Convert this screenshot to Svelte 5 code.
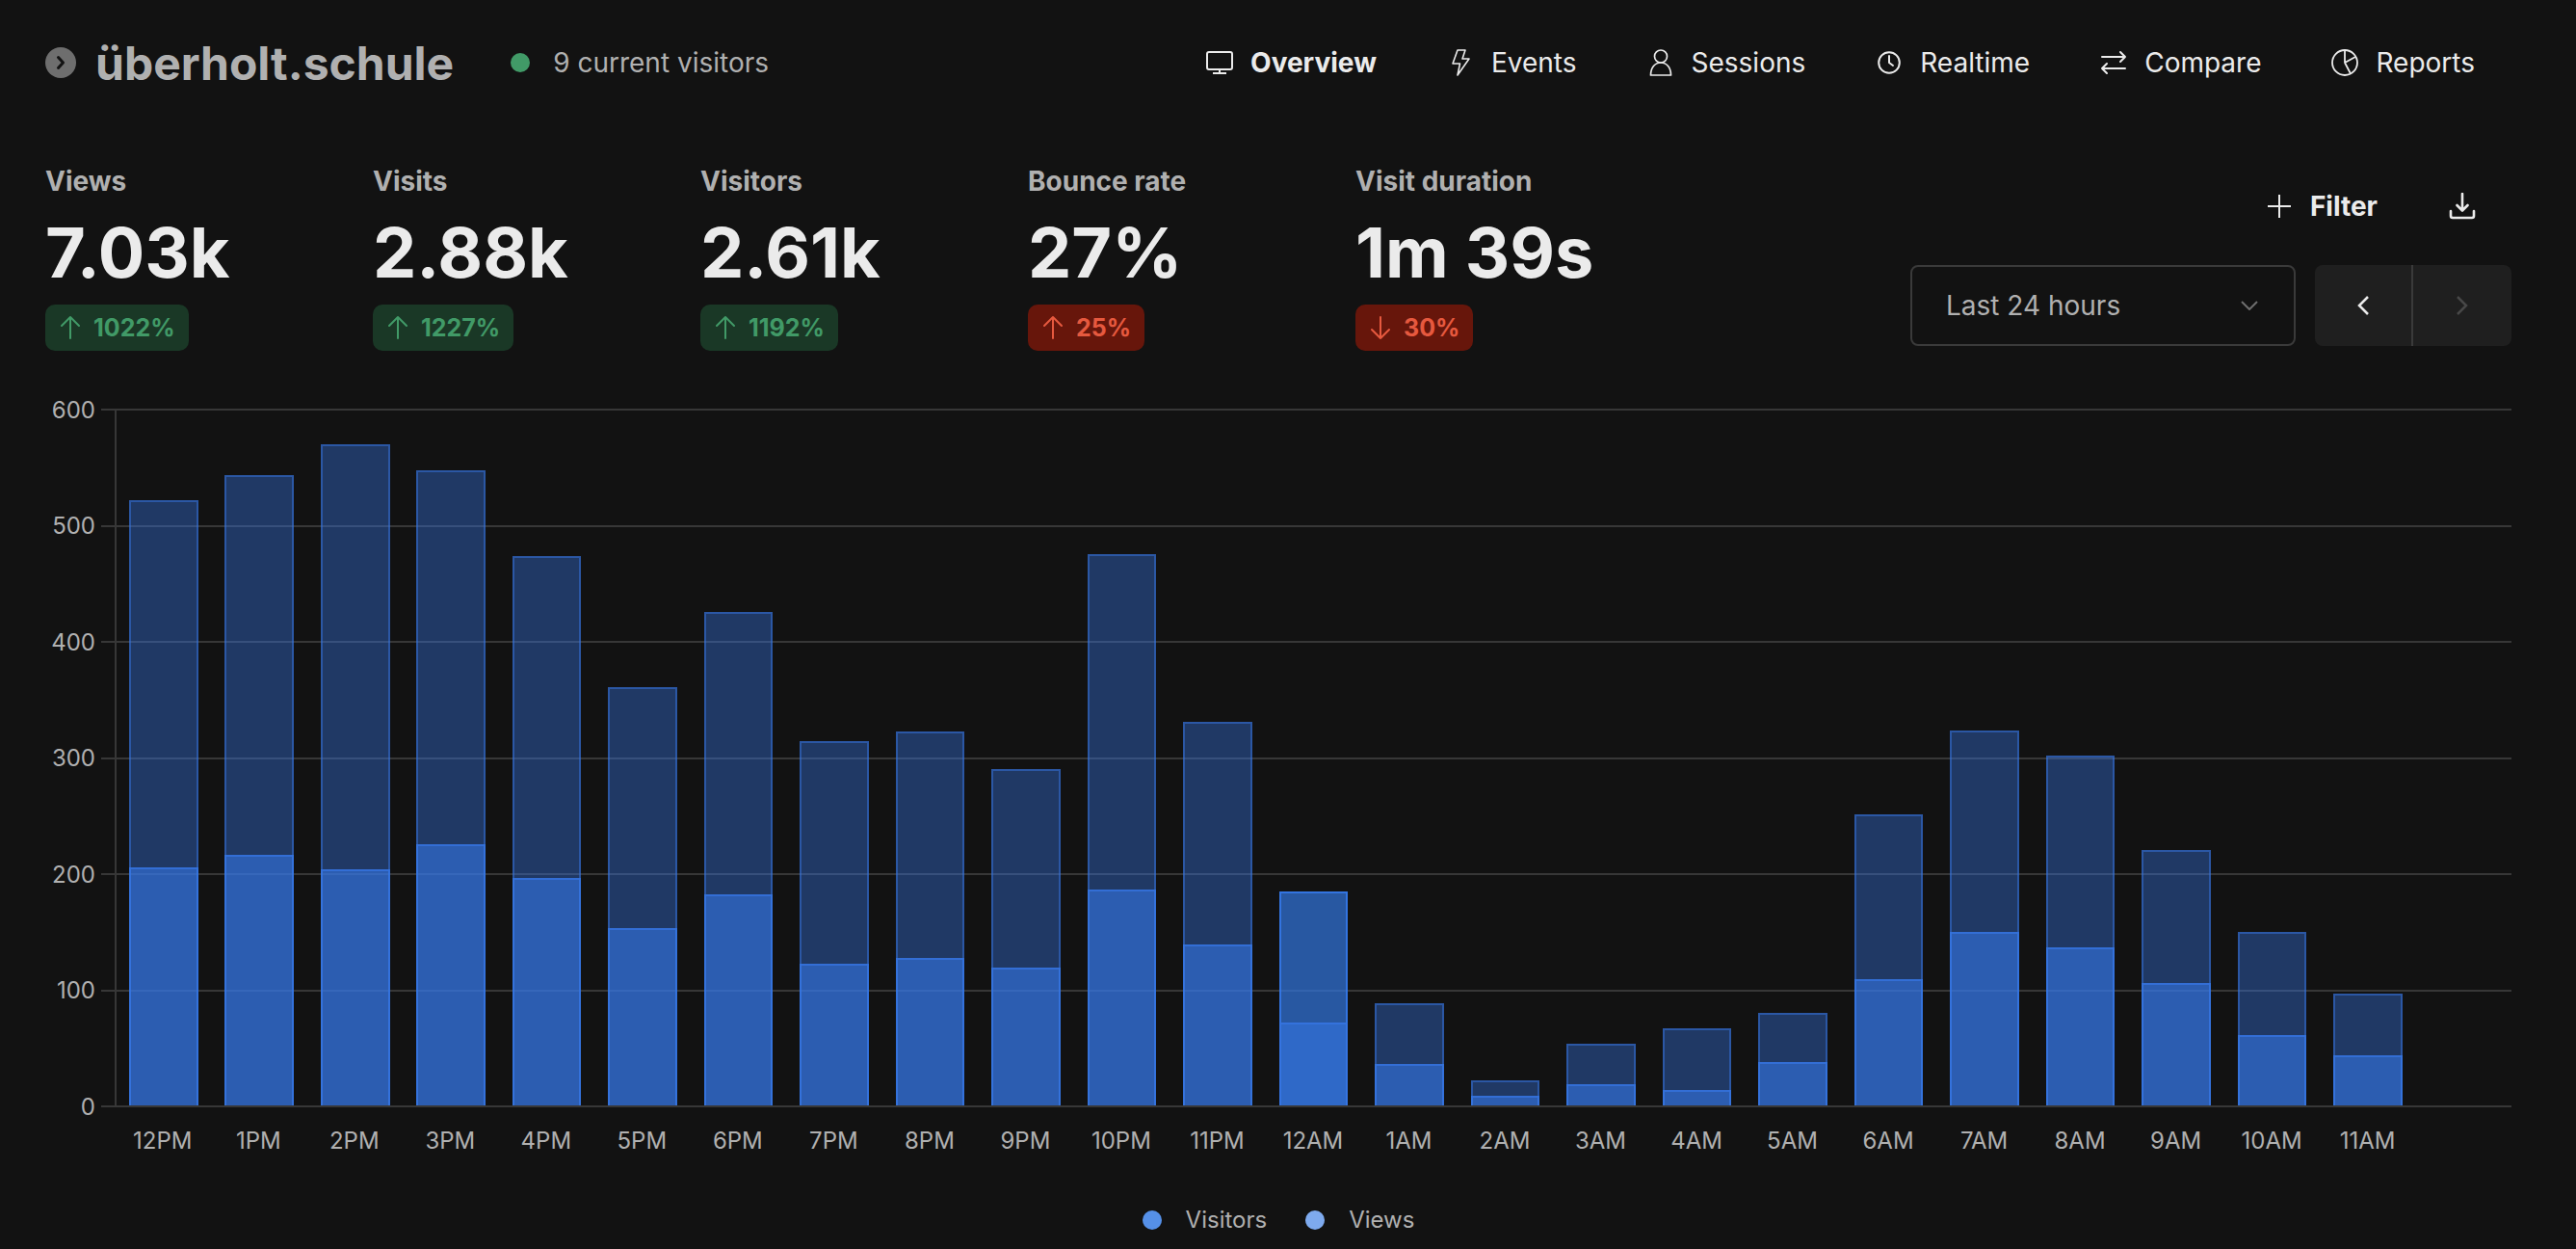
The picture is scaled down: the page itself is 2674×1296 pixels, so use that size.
<script>
  const metrics = [
    { label: 'Views', value: '7.03k', change: '1022%', up: true, good: true },
    { label: 'Visits', value: '2.88k', change: '1227%', up: true, good: true },
    { label: 'Visitors', value: '2.61k', change: '1192%', up: true, good: true },
    { label: 'Bounce rate', value: '27%', change: '25%', up: true, good: false },
    { label: 'Visit duration', value: '1m 39s', change: '30%', up: false, good: false }
  ];

  const tabs = ['Overview', 'Events', 'Sessions', 'Realtime', 'Compare', 'Reports'];
  let activeTab = 'Overview';
  let range = '24hour';

  const max = 600;
  const ticks = [600, 500, 400, 300, 200, 100, 0];

  // last slot is the current hour, nothing recorded yet
  const hours = [
    { label: '12PM', views: 521, visitors: 205 },
    { label: '1PM', views: 543, visitors: 216 },
    { label: '2PM', views: 569, visitors: 203 },
    { label: '3PM', views: 547, visitors: 225 },
    { label: '4PM', views: 473, visitors: 196 },
    { label: '5PM', views: 360, visitors: 153 },
    { label: '6PM', views: 425, visitors: 182 },
    { label: '7PM', views: 314, visitors: 122 },
    { label: '8PM', views: 322, visitors: 127 },
    { label: '9PM', views: 290, visitors: 119 },
    { label: '10PM', views: 475, visitors: 186 },
    { label: '11PM', views: 330, visitors: 139 },
    { label: '12AM', views: 184, visitors: 71, active: true },
    { label: '1AM', views: 88, visitors: 36 },
    { label: '2AM', views: 22, visitors: 8 },
    { label: '3AM', views: 53, visitors: 18 },
    { label: '4AM', views: 66, visitors: 13 },
    { label: '5AM', views: 80, visitors: 37 },
    { label: '6AM', views: 251, visitors: 109 },
    { label: '7AM', views: 323, visitors: 149 },
    { label: '8AM', views: 301, visitors: 136 },
    { label: '9AM', views: 220, visitors: 105 },
    { label: '10AM', views: 149, visitors: 61 },
    { label: '11AM', views: 96, visitors: 43 },
    { label: '', views: 0, visitors: 0 }
  ];
</script>

<main class="page">
  <header class="header">
    <div class="site">
      <svg class="site-icon" viewBox="0 0 32 32" aria-hidden="true">
        <circle cx="16" cy="16" r="16" fill="#6e6e6e" />
        <path d="M13.5 10.5l5 5.5-5 5.5" fill="none" stroke="#121212" stroke-width="3" stroke-linecap="round" stroke-linejoin="round" />
      </svg>
      <h1>überholt.schule</h1>
      <div class="online"><span class="online-dot"></span>9 current visitors</div>
    </div>

    <nav class="tabs">
      {#each tabs as tab}
        <a href="#{tab.toLowerCase()}" class="tab" class:active={tab === activeTab} on:click={() => (activeTab = tab)}>
          <svg class="icon" viewBox="0 0 28 28" fill="none" stroke="currentColor" stroke-width="2" stroke-linejoin="round" aria-hidden="true">
            {#if tab === 'Overview'}
              <rect x="1" y="3" width="26" height="18" rx="2" />
              <path d="M14 21v3M7 25h14" />
            {:else if tab === 'Events'}
              <path d="M11 1h8l-3 9h7L11 27l2.5-12H6z" stroke-width="1.6" />
            {:else if tab === 'Sessions'}
              <circle cx="14" cy="7.5" r="6.5" stroke-width="1.7" />
              <path d="M3.5 27c0-8 4.5-13 10.5-13s10.5 5 10.5 13z" stroke-width="1.7" />
            {:else if tab === 'Realtime'}
              <circle cx="14" cy="14" r="10.8" />
              <path d="M14 7v7l4 3" stroke-linecap="round" />
            {:else if tab === 'Compare'}
              <path d="M2 8h24M21 3l5 5-5 5M26 20H2M7 15l-5 5 5 5" stroke-linecap="round" />
            {:else}
              <circle cx="14" cy="14" r="13" stroke-width="1.8" />
              <path d="M14 1v13l11-6M14 14l6 11.5" stroke-width="1.8" />
            {/if}
          </svg>
          <span>{tab}</span>
        </a>
      {/each}
    </nav>
  </header>

  <section class="summary">
    <div class="metrics">
      {#each metrics as metric}
        <div class="metric">
          <div class="metric-label">{metric.label}</div>
          <div class="metric-value">{metric.value}</div>
          <div class="change" class:bad={!metric.good}>
            <svg class="arrow" viewBox="0 0 24 26" fill="none" stroke="currentColor" stroke-width="2" stroke-linecap="round" stroke-linejoin="round" aria-hidden="true">
              {#if metric.up}
                <path d="M12 24V2M3 11l9-9 9 9" />
              {:else}
                <path d="M12 2v22M3 15l9 9 9-9" />
              {/if}
            </svg>
            {metric.change}
          </div>
        </div>
      {/each}
    </div>

    <div class="controls">
      <div class="actions">
        <button class="filter">
          <svg class="plus" viewBox="0 0 24 24" stroke="currentColor" stroke-width="2" aria-hidden="true">
            <path d="M12 0v24M0 12h24" />
          </svg>
          Filter
        </button>
        <button class="download" aria-label="Download">
          <svg class="icon" viewBox="0 0 28 28" fill="none" stroke="currentColor" stroke-width="2.6" stroke-linecap="round" stroke-linejoin="round" aria-hidden="true">
            <path d="M14 1v17M8.5 13l5.5 5.5 5.5-5.5M2 19v5a2 2 0 0 0 2 2h20a2 2 0 0 0 2-2v-5" />
          </svg>
        </button>
      </div>
      <div class="dates">
        <div class="select">
          <select aria-label="Date range" bind:value={range}>
            <option value="24hour">Last 24 hours</option>
            <option value="7day">Last 7 days</option>
            <option value="30day">Last 30 days</option>
          </select>
          <svg class="chevron" viewBox="0 0 18 10" fill="none" stroke="currentColor" stroke-width="2" aria-hidden="true">
            <path d="M1 1l8 8 8-8" />
          </svg>
        </div>
        <div class="pager">
          <button aria-label="Previous">
            <svg viewBox="0 0 12 20" fill="none" stroke="currentColor" stroke-width="2.5" aria-hidden="true">
              <path d="M11 1L2 10l9 9" />
            </svg>
          </button>
          <button aria-label="Next" disabled>
            <svg viewBox="0 0 12 20" fill="none" stroke="currentColor" stroke-width="2.5" aria-hidden="true">
              <path d="M1 1l9 9-9 9" />
            </svg>
          </button>
        </div>
      </div>
    </div>
  </section>

  <section class="chart">
    <div class="y-axis">
      {#each ticks as tick}
        <span>{tick}</span>
      {/each}
    </div>
    <div class="plot">
      <div class="grid">
        {#each ticks as tick}
          <div class="grid-line"></div>
        {/each}
      </div>
      <div class="bars">
        {#each hours as hour}
          <div class="slot" class:active={hour.active}>
            {#if hour.views}
              <div class="bar views" style="height: {(hour.views / max) * 100}%"></div>
              <div class="bar visitors" style="height: {(hour.visitors / max) * 100}%"></div>
            {/if}
          </div>
        {/each}
      </div>
    </div>
    <div class="x-axis">
      {#each hours as hour}
        <span>{hour.label}</span>
      {/each}
    </div>
  </section>

  <div class="legend">
    <div class="legend-item"><span class="legend-dot"></span>Visitors</div>
    <div class="legend-item"><span class="legend-dot light"></span>Views</div>
  </div>
</main>

<style>
  :global(body) {
    margin: 0;
    background: #121212;
  }

  .page {
    box-sizing: border-box;
    min-height: 100vh;
    padding: 23px 67px 0 47px;
    background: #121212;
    color: #ebebeb;
    font-family: Inter, 'Liberation Sans', sans-serif;
    font-size: 28px;
  }

  .page * {
    box-sizing: border-box;
  }

  button,
  select {
    border: 0;
    background: none;
    color: inherit;
    font: inherit;
    cursor: pointer;
  }

  .header {
    display: flex;
    align-items: center;
    justify-content: space-between;
    height: 84px;
  }

  .site {
    display: flex;
    align-items: center;
    color: #b0b0b0;
  }

  .site-icon {
    width: 32px;
    height: 32px;
    margin-right: 20px;
  }

  h1 {
    margin: 0;
    font-size: 48px;
    font-weight: 700;
  }

  .online {
    display: flex;
    align-items: center;
    gap: 24px;
    margin-left: 59px;
  }

  .online-dot {
    width: 20px;
    height: 20px;
    border-radius: 50%;
    background: #419a67;
  }

  .tabs {
    display: flex;
    gap: 73px;
    margin-right: 38px;
  }

  .tab {
    display: flex;
    align-items: center;
    gap: 18px;
    color: inherit;
    text-decoration: none;
  }

  .tab.active {
    font-weight: 700;
  }

  .icon {
    width: 28px;
    height: 28px;
  }

  .summary {
    display: flex;
    justify-content: space-between;
    margin-top: 63px;
  }

  .metrics {
    display: grid;
    grid-template-columns: repeat(5, 340px);
  }

  .metric-label {
    color: #b0b0b0;
    font-weight: 700;
    line-height: 36px;
  }

  .metric-value {
    font-size: 72px;
    font-weight: 700;
    line-height: 80px;
    margin: 16px 0 14px;
    white-space: nowrap;
  }

  .change {
    display: inline-flex;
    align-items: center;
    gap: 12px;
    height: 48px;
    padding: 0 14px;
    border-radius: 10px;
    background: #1a3826;
    color: #419a67;
    font-size: 25px;
    font-weight: 700;
  }

  .change.bad {
    background: #67160b;
    color: #e6593f;
  }

  .arrow {
    width: 24px;
    height: 26px;
  }

  .controls {
    display: flex;
    flex-direction: column;
    align-items: flex-end;
    justify-content: space-between;
    padding: 27px 0 5px;
  }

  .actions {
    display: flex;
    align-items: center;
    gap: 74px;
    margin-right: 37px;
  }

  .filter {
    display: flex;
    align-items: center;
    gap: 20px;
    padding: 0;
    font-weight: 700;
  }

  .plus {
    width: 24px;
    height: 24px;
  }

  .download {
    display: flex;
    padding: 0;
  }

  .dates {
    display: flex;
    gap: 20px;
  }

  .select {
    position: relative;
    width: 400px;
  }

  .select select {
    width: 100%;
    height: 84px;
    padding: 0 35px;
    border: 2px solid #3a3a3a;
    border-radius: 8px;
    color: #b0b0b0;
    appearance: none;
  }

  /* sits over the native select */
  .chevron {
    position: absolute;
    top: 37px;
    right: 39px;
    width: 18px;
    height: 10px;
    color: #6e6e6e;
    pointer-events: none;
  }

  .pager {
    display: flex;
    border-radius: 8px;
    background: #1f1f1f;
  }

  .pager button {
    display: flex;
    align-items: center;
    justify-content: center;
    width: 102px;
    height: 84px;
    padding: 0;
  }

  .pager button:first-child {
    border-right: 2px solid #3a3a3a;
  }

  .pager button:disabled {
    color: #484848;
  }

  .pager svg {
    width: 12px;
    height: 20px;
  }

  .chart {
    display: grid;
    grid-template-columns: 72px 1fr;
    grid-template-rows: 725px auto;
    margin-top: 60px;
    color: #b0b0b0;
    font-size: 24px;
  }

  .y-axis {
    display: flex;
    flex-direction: column;
    justify-content: space-between;
    align-items: flex-end;
    padding-right: 20px;
  }

  .y-axis span {
    display: flex;
    align-items: center;
    height: 2px;
  }

  .plot {
    display: grid;
    border-left: 2px solid #373737;
  }

  .grid,
  .bars {
    grid-area: 1 / 1;
  }

  .grid {
    display: flex;
    flex-direction: column;
    justify-content: space-between;
    margin-left: -16px;
  }

  .grid-line {
    height: 2px;
    background: #373737;
  }

  .bars {
    display: flex;
    margin: 0 0 2px -1px;
  }

  .slot {
    flex: 1;
    display: grid;
    align-items: end;
    grid-template-columns: 72%;
    grid-template-rows: 100%;
    justify-content: center;
  }

  .bar {
    grid-area: 1 / 1;
    border: 2px solid;
    border-bottom: 0;
  }

  .views {
    border-color: rgba(54, 118, 228, 0.5);
    background: rgba(54, 118, 228, 0.4);
  }

  .visitors {
    border-color: rgba(54, 118, 228, 0.7);
    background: rgba(54, 118, 228, 0.6);
  }

  .active .views {
    border-color: rgba(54, 124, 240, 0.8);
    background: rgba(50, 118, 224, 0.7);
  }

  .active .visitors {
    background: rgba(50, 112, 216, 0.7);
  }

  .x-axis {
    grid-column: 2;
    display: flex;
    padding-top: 19px;
  }

  .x-axis span {
    flex: 1;
    text-align: center;
    line-height: 32px;
  }

  .legend {
    display: flex;
    justify-content: center;
    gap: 40px;
    margin-top: 50px;
    color: #b0b0b0;
    font-size: 24px;
    line-height: 32px;
  }

  .legend-item {
    display: flex;
    align-items: center;
    gap: 25px;
  }

  .legend-dot {
    width: 20px;
    height: 20px;
    border-radius: 50%;
    background: #5590e8;
  }

  .legend-dot.light {
    background: #7eaaee;
  }
</style>
